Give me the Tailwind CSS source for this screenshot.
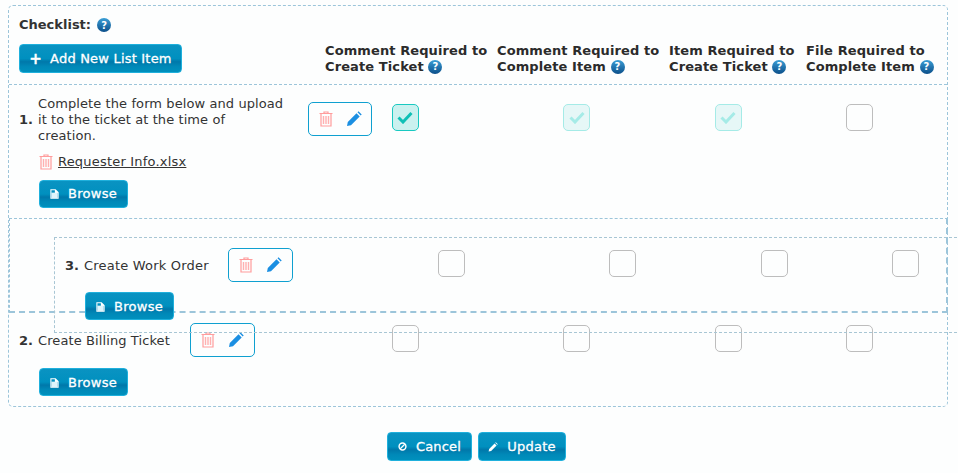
<!DOCTYPE html>
<html lang="en">
<head>
  <meta charset="UTF-8" />
  <title>Checklist</title>
  <script src="https://cdn.jsdelivr.net/npm/@tailwindcss/browser@4"></script>
</head>
<body class="bg-[#fdfefe] h-[473px] w-[958px] overflow-hidden relative font-['DejaVu_Sans',sans-serif] text-[13px] text-[#333]">
  <svg class="hidden">
    <symbol id="trash" viewBox="0 0 14 16">
      <path d="M0.5 2.5h13M5 2.5V1h4v1.5M2 2.5v12.5h10V2.5" fill="none" stroke="#ff9c9c" stroke-width="1.2" />
      <path d="M4.5 5v8M7 5v8M9.5 5v8" fill="none" stroke="#ffb0b0" stroke-width="1.4" />
    </symbol>
    <symbol id="pencil" viewBox="0 0 16 16">
      <path d="M1 15l.8-4L10.5 2.3l3.2 3.2L5 14.2zM11.5 1.3l1-1 3.2 3.2-1 1z" fill="#1b8fe2" />
    </symbol>
    <symbol id="file" viewBox="0 0 10 11">
      <path d="M1 .8h5l3 3v6.4H1zM6 .8v3h3" fill="none" stroke="#fff" stroke-width="1.2" />
      <path d="M1.5 4h7v6h-7z" fill="#dff4fb" />
    </symbol>
    <symbol id="check" viewBox="0 0 16 13">
      <path d="M1.5 6.5l4.5 4.5 8.5-9" fill="none" stroke="currentColor" stroke-width="3" />
    </symbol>
  </svg>

  <div class="mx-2 mt-[5px] w-[940px] h-[402px] border border-dashed border-[#9cc5da] rounded-[5px]">
    <!-- header -->
    <div class="h-[79px] flex border-b border-dashed border-[#9cc5da]">
      <div class="w-[316px] pl-[10px] pt-[10px]">
        <div class="flex items-center gap-[6px] h-[18px] font-bold">Checklist: <span class="size-[14px] rounded-full bg-linear-to-b from-[#3b9fd6] to-[#0b4f8a] text-white text-[10px] font-bold flex items-center justify-center">?</span></div>
        <button class="mt-[10px] h-[29px] w-[163px] flex items-center justify-center gap-[8px] pt-px rounded-[4px] border border-[#1fb0dc] bg-[linear-gradient(#0a93c2_0%,#0090bf_50%,#0078aa_62%,#0089b8_80%,#0090bd_100%)] text-white [-webkit-text-stroke:0.3px_white] tracking-[0.2px]">
          <span class="text-[15px] font-bold leading-none">+</span><span>Add New List Item</span>
        </button>
      </div>
      <div class="flex pt-[37px] font-bold leading-4 text-[#2b2b2b] tracking-[0.1px]">
        <div class="w-[172px]">Comment Required to<br />Create Ticket <span class="inline-flex align-[1px] size-[14px] rounded-full bg-linear-to-b from-[#3b9fd6] to-[#0b4f8a] text-white text-[10px] items-center justify-center">?</span></div>
        <div class="w-[172px]">Comment Required to<br />Complete Item <span class="inline-flex align-[1px] size-[14px] rounded-full bg-linear-to-b from-[#3b9fd6] to-[#0b4f8a] text-white text-[10px] items-center justify-center">?</span></div>
        <div class="w-[137px]">Item Required to<br />Create Ticket <span class="inline-flex align-[1px] size-[14px] rounded-full bg-linear-to-b from-[#3b9fd6] to-[#0b4f8a] text-white text-[10px] items-center justify-center">?</span></div>
        <div class="w-[135px]">File Required to<br />Complete Item <span class="inline-flex align-[1px] size-[14px] rounded-full bg-linear-to-b from-[#3b9fd6] to-[#0b4f8a] text-white text-[10px] items-center justify-center">?</span></div>
      </div>
    </div>

    <!-- row 1 -->
    <div class="h-[133px] flex pl-[10px] pt-[11px]">
      <div class="w-[289px] shrink-0">
        <div class="flex items-center">
          <b class="w-[19px]">1.</b>
          <div class="w-[247px] leading-4 tracking-[0.09px]">Complete the form below and upload it to the ticket at the time of creation.</div>
        </div>
        <div class="mt-[8px] ml-[20px] flex items-center gap-[5px]">
          <svg class="w-[14px] h-[16px]"><use href="#trash" /></svg><span class="underline tracking-[0.2px]">Requester Info.xlsx</span>
        </div>
        <button class="mt-[8px] ml-[20px] h-[28px] w-[89px] flex items-center justify-center gap-[9px] pt-px rounded-[4px] border border-[#1fb0dc] bg-[linear-gradient(#0a93c2_0%,#0090bf_50%,#0078aa_62%,#0089b8_80%,#0090bd_100%)] text-white [-webkit-text-stroke:0.3px_white] tracking-[0.3px]"><svg class="w-[9px] h-[10px]"><use href="#file" /></svg>Browse</button>
      </div>
      <div class="w-[64px] h-[34px] mt-[6px] shrink-0 flex items-center justify-center gap-[13px] border border-[#0fa0d0] rounded-[5px]">
        <svg class="w-[14px] h-[16px]"><use href="#trash" /></svg><svg class="w-[16px] h-[16px]"><use href="#pencil" /></svg>
      </div>
      <div class="flex -ml-[53px] mt-[8px] h-[27px]">
        <div class="w-[172px] flex justify-center"><span class="size-[27px] rounded-[5px] border border-[#19c9c1] bg-[#caf1ef] text-[#0fc0b6] flex items-center justify-center"><svg class="w-[16px] h-[13px]"><use href="#check" /></svg></span></div>
        <div class="w-[171px] flex justify-center"><span class="size-[27px] rounded-[5px] border border-[#a5ebe7] bg-[#e6f7f7] text-[#a5ebe7] flex items-center justify-center"><svg class="w-[16px] h-[13px]"><use href="#check" /></svg></span></div>
        <div class="w-[132px] flex justify-center"><span class="size-[27px] rounded-[5px] border border-[#a5ebe7] bg-[#e6f7f7] text-[#a5ebe7] flex items-center justify-center"><svg class="w-[16px] h-[13px]"><use href="#check" /></svg></span></div>
        <div class="w-[130px] flex justify-center"><span class="size-[27px] rounded-[5px] border border-[#bdbdbd]"></span></div>
      </div>
    </div>

    <!-- placeholder for the dragged row -->
    <div class="h-[95px] -mr-px border-t border-r-2 border-b-2 border-l border-dashed border-[#9cc5da]"></div>

    <!-- row 2 -->
    <div class="h-[92px] flex pl-[10px] pt-[10px]">
      <div class="w-[171px] shrink-0">
        <div class="flex items-center h-[36px]">
          <b class="w-[19px]">2.</b><span class="tracking-[0.1px]">Create Billing Ticket</span>
        </div>
        <button class="mt-[9px] ml-[20px] h-[28px] w-[89px] flex items-center justify-center gap-[9px] pt-px rounded-[4px] border border-[#1fb0dc] bg-[linear-gradient(#0a93c2_0%,#0090bf_50%,#0078aa_62%,#0089b8_80%,#0090bd_100%)] text-white [-webkit-text-stroke:0.3px_white] tracking-[0.3px]"><svg class="w-[9px] h-[10px]"><use href="#file" /></svg>Browse</button>
      </div>
      <div class="w-[65px] h-[34px] shrink-0 flex items-center justify-center gap-[13px] border border-[#0fa0d0] rounded-[5px]">
        <svg class="w-[14px] h-[16px]"><use href="#trash" /></svg><svg class="w-[16px] h-[16px]"><use href="#pencil" /></svg>
      </div>
      <div class="flex ml-[64px] mt-[2px] h-[27px]">
        <div class="w-[172px] flex justify-center"><span class="size-[27px] rounded-[5px] border border-[#bdbdbd]"></span></div>
        <div class="w-[171px] flex justify-center"><span class="size-[27px] rounded-[5px] border border-[#bdbdbd]"></span></div>
        <div class="w-[132px] flex justify-center"><span class="size-[27px] rounded-[5px] border border-[#bdbdbd]"></span></div>
        <div class="w-[130px] flex justify-center"><span class="size-[27px] rounded-[5px] border border-[#bdbdbd]"></span></div>
      </div>
    </div>
  </div>

  <!-- dragged row, sits over the list -->
  <div class="absolute left-[54px] top-[237px] w-[938px] h-[96px] border border-dashed border-[#a8c6d4] flex pl-[10px] pt-[10px]">
    <div class="w-[163px] shrink-0">
      <div class="flex items-center h-[36px]">
        <b class="w-[19px]">3.</b><span class="tracking-[0.2px]">Create Work Order</span>
      </div>
      <button class="mt-[8px] ml-[20px] h-[28px] w-[89px] flex items-center justify-center gap-[9px] pt-[2px] rounded-[4px] border border-[#1fb0dc] bg-[linear-gradient(#0a93c2_0%,#0090bf_50%,#0078aa_62%,#0089b8_80%,#0090bd_100%)] text-white [-webkit-text-stroke:0.3px_white] tracking-[0.3px]"><svg class="w-[9px] h-[10px]"><use href="#file" /></svg>Browse</button>
    </div>
    <div class="w-[65px] h-[34px] shrink-0 flex items-center justify-center gap-[13px] border border-[#0fa0d0] rounded-[5px]">
      <svg class="w-[14px] h-[16px]"><use href="#trash" /></svg><svg class="w-[16px] h-[16px]"><use href="#pencil" /></svg>
    </div>
    <div class="flex ml-[72px] mt-[2px] h-[27px]">
      <div class="w-[172px] flex justify-center"><span class="size-[27px] rounded-[5px] border border-[#bdbdbd]"></span></div>
      <div class="w-[171px] flex justify-center"><span class="size-[27px] rounded-[5px] border border-[#bdbdbd]"></span></div>
      <div class="w-[132px] flex justify-center"><span class="size-[27px] rounded-[5px] border border-[#bdbdbd]"></span></div>
      <div class="w-[130px] flex justify-center"><span class="size-[27px] rounded-[5px] border border-[#bdbdbd]"></span></div>
    </div>
  </div>

  <!-- footer buttons -->
  <div class="mt-[25px] flex justify-center gap-[6px] pr-[5px]">
    <button class="h-[29px] w-[85px] flex items-center justify-center gap-[9px] rounded-[4px] border border-[#1fb0dc] bg-[linear-gradient(#0a93c2_0%,#0090bf_50%,#0078aa_62%,#0089b8_80%,#0090bd_100%)] text-white [-webkit-text-stroke:0.3px_white] tracking-[0.2px]">
      <svg class="size-[9px]" viewBox="0 0 10 10"><circle cx="5" cy="5" r="3.8" fill="none" stroke="#fff" stroke-width="1.6" /><path d="M2.5 7.5l5-5" stroke="#fff" stroke-width="1.4" /></svg>Cancel
    </button>
    <button class="h-[29px] w-[88px] flex items-center justify-center gap-[9px] rounded-[4px] border border-[#1fb0dc] bg-[linear-gradient(#0a93c2_0%,#0090bf_50%,#0078aa_62%,#0089b8_80%,#0090bd_100%)] text-white [-webkit-text-stroke:0.3px_white] tracking-[0.2px]">
      <svg class="size-[10px]" viewBox="0 0 16 16"><path d="M1 15l.8-4L10.5 2.3l3.2 3.2L5 14.2zM11.5 1.3l1-1 3.2 3.2-1 1z" fill="#fff" /></svg>Update
    </button>
  </div>
</body>
</html>
